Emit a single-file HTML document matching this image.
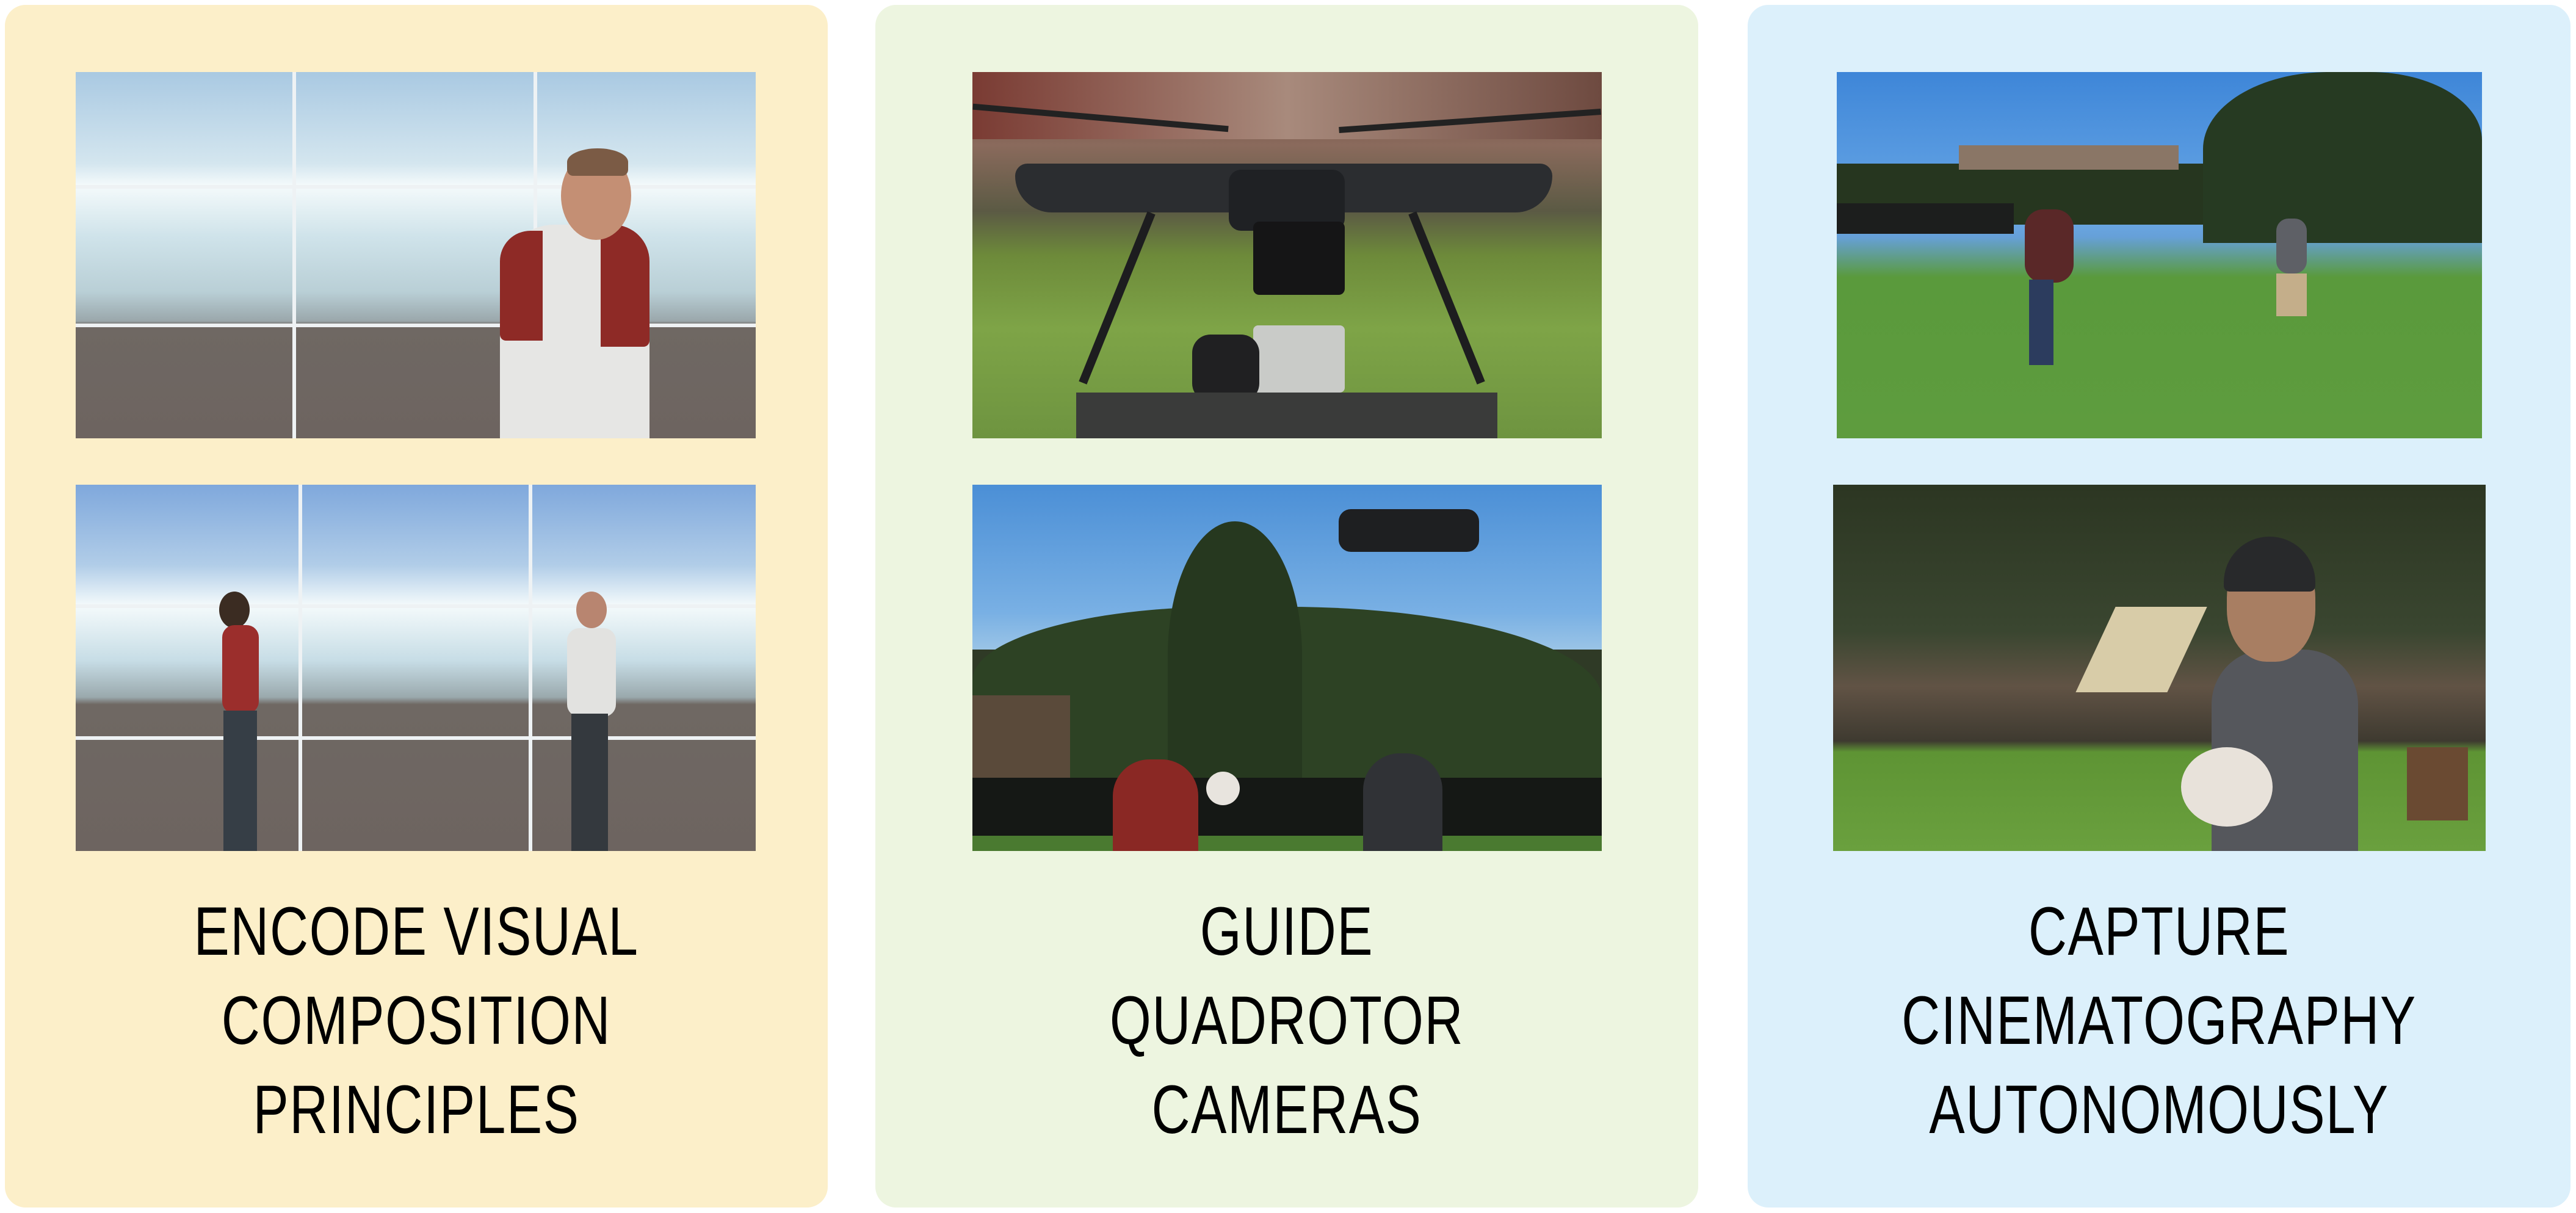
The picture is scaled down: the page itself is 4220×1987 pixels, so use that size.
<!DOCTYPE html>
<html><head><meta charset="utf-8"><style>
*{margin:0;padding:0;box-sizing:border-box}
body{width:4220px;height:1987px;background:#fff;position:relative;overflow:hidden;font-family:"Liberation Sans",sans-serif}
.p{position:absolute;top:8px;height:1970px;width:1348px;border-radius:34px}
.im{position:absolute;overflow:hidden}
.t{position:absolute;left:0;width:100%;text-align:center;font-size:112px;line-height:146px;color:#000;transform:scaleX(.78);top:1453px;letter-spacing:2px}
.a{position:absolute}
.vl{position:absolute;top:0;bottom:0;width:6px;background:#eef2f4}
.hl{position:absolute;left:0;right:0;height:6px;background:#eef2f4}
</style></head><body>
<div class="p" style="left:8px;background:#fcefc9"></div>
<div class="p" style="left:1434px;background:#edf5e0"></div>
<div class="p" style="left:2863px;background:#dcf0fb"></div>

<!-- panel 1 img 1 -->
<div class="im" style="left:124px;top:118px;width:1114px;height:600px;background:linear-gradient(#a9c9e2 0%,#d4e6ef 25%,#f4fafb 31%,#cfe3ea 45%,#b9cfd6 60%,#9aa7ab 68%,#6f6863 69%,#6d6460 100%)">
 <div class="vl" style="left:355px"></div><div class="vl" style="left:750px"></div>
 <div class="hl" style="top:185px"></div><div class="hl" style="top:412px"></div>
 <div class="a" style="left:695px;top:250px;width:245px;height:350px;background:#e6e6e4;border-radius:90px 90px 0 0"></div>
 <div class="a" style="left:695px;top:260px;width:70px;height:180px;background:#8e2a26;border-radius:50px 0 0 10px"></div>
 <div class="a" style="left:860px;top:250px;width:80px;height:200px;background:#8e2a26;border-radius:0 60px 10px 0"></div>
 <div class="a" style="left:795px;top:130px;width:115px;height:145px;background:#c48f74;border-radius:50%"></div>
 <div class="a" style="left:805px;top:125px;width:100px;height:45px;background:#7b5b45;border-radius:50% 50% 10px 10px"></div>
</div>
<!-- panel 1 img 2 -->
<div class="im" style="left:124px;top:794px;width:1114px;height:600px;background:linear-gradient(#7fa8dc 0%,#b1cde8 22%,#f4fafb 33%,#c7dde6 48%,#9aa9ad 58%,#6f6863 60%,#6d6460 100%)">
 <div class="vl" style="left:365px"></div><div class="vl" style="left:742px"></div>
 <div class="hl" style="top:196px"></div><div class="hl" style="top:412px"></div>
 <div class="a" style="left:235px;top:175px;width:50px;height:60px;background:#3b2c22;border-radius:50%"></div>
 <div class="a" style="left:240px;top:230px;width:60px;height:145px;background:#9b2e2c;border-radius:20px"></div>
 <div class="a" style="left:242px;top:370px;width:55px;height:230px;background:#363e46"></div>
 <div class="a" style="left:820px;top:175px;width:50px;height:60px;background:#b88570;border-radius:50%"></div>
 <div class="a" style="left:805px;top:235px;width:80px;height:145px;background:#e2e2e0;border-radius:20px"></div>
 <div class="a" style="left:812px;top:375px;width:60px;height:225px;background:#34393e"></div>
</div>
<div class="t" style="left:8px;width:1348px">ENCODE VISUAL<br>COMPOSITION<br>PRINCIPLES</div>

<!-- panel 2 img 1 -->
<div class="im" style="left:1593px;top:118px;width:1031px;height:600px;background:linear-gradient(#6a4a42 0%,#8a6a5c 20%,#5b5a44 38%,#6d8a3a 50%,#7ea447 70%,#6e9440 100%)">
 <div class="a" style="left:0;top:0;width:1031px;height:110px;background:linear-gradient(90deg,#7a3b33,#a88a7c 50%,#6e4a40)"></div>
 <div class="a" style="left:70px;top:150px;width:880px;height:80px;background:#2b2d30;border-radius:40px 40px 120px 120px"></div>
 <div class="a" style="left:420px;top:160px;width:190px;height:100px;background:#1f2124;border-radius:20px"></div>
 <div class="a" style="left:0;top:70px;width:420px;height:10px;background:#222;transform:rotate(5deg)"></div>
 <div class="a" style="left:600px;top:75px;width:430px;height:10px;background:#222;transform:rotate(-4deg)"></div>
 <div class="a" style="left:230px;top:220px;width:14px;height:300px;background:#1d1d1f;transform:rotate(22deg)"></div>
 <div class="a" style="left:770px;top:220px;width:14px;height:300px;background:#1d1d1f;transform:rotate(-22deg)"></div>
 <div class="a" style="left:460px;top:245px;width:150px;height:120px;background:#151516;border-radius:10px"></div>
 <div class="a" style="left:460px;top:415px;width:150px;height:110px;background:#c9cbc8;border-radius:8px"></div>
 <div class="a" style="left:360px;top:430px;width:110px;height:110px;background:#202022;border-radius:30px"></div>
 <div class="a" style="left:170px;top:525px;width:690px;height:80px;background:#3a3b3a"></div>
</div>
<!-- panel 2 img 2 -->
<div class="im" style="left:1593px;top:794px;width:1031px;height:600px;background:linear-gradient(#4b8fd6 0%,#79b0e4 35%,#9ac4e6 45%,#2f3a26 45%)">
 <div class="a" style="left:0;top:200px;width:1031px;height:300px;background:#2d4224;border-radius:40% 50% 0 0"></div>
 <div class="a" style="left:320px;top:60px;width:220px;height:440px;background:#26381f;border-radius:50% 50% 0 0"></div>
 <div class="a" style="left:0;top:345px;width:160px;height:160px;background:#5a4a3a"></div>
 <div class="a" style="left:0;top:480px;width:1031px;height:100px;background:#151815"></div>
 <div class="a" style="left:0;top:575px;width:1031px;height:25px;background:#4a7a30"></div>
 <div class="a" style="left:600px;top:40px;width:230px;height:70px;background:#1e1f21;border-radius:20px"></div>
 <div class="a" style="left:230px;top:450px;width:140px;height:150px;background:#8a2824;border-radius:60px 60px 0 0"></div>
 <div class="a" style="left:640px;top:440px;width:130px;height:160px;background:#303236;border-radius:60px 60px 0 0"></div>
 <div class="a" style="left:383px;top:470px;width:55px;height:55px;background:#e8e4de;border-radius:50%"></div>
</div>
<div class="t" style="left:1434px;width:1348px">GUIDE<br>QUADROTOR<br>CAMERAS</div>

<!-- panel 3 img 1 -->
<div class="im" style="left:3009px;top:118px;width:1057px;height:600px;background:linear-gradient(#3e86d8 0%,#6aa8e6 40%,#66a0d8 45%,#5a9a3c 56%,#5e9c3e 100%)">
 <div class="a" style="left:0;top:150px;width:1057px;height:100px;background:#26361f"></div>
 <div class="a" style="left:600px;top:0;width:457px;height:280px;background:#263a22;border-radius:45% 40% 0 0"></div>
 <div class="a" style="left:200px;top:120px;width:360px;height:40px;background:#8a7666"></div>
 <div class="a" style="left:0;top:215px;width:290px;height:50px;background:#1c1e1d"></div>
 <div class="a" style="left:308px;top:225px;width:80px;height:120px;background:#5a2828;border-radius:30px"></div>
 <div class="a" style="left:315px;top:340px;width:40px;height:140px;background:#2c3c5e"></div>
 <div class="a" style="left:720px;top:240px;width:50px;height:90px;background:#5e6066;border-radius:20px"></div>
 <div class="a" style="left:720px;top:330px;width:50px;height:70px;background:#c4ae8a"></div>
</div>
<!-- panel 3 img 2 -->
<div class="im" style="left:3003px;top:794px;width:1069px;height:600px;background:linear-gradient(#2c3622 0%,#3a4630 40%,#615345 55%,#3e3a30 70%,#5e9434 73%,#6aa03e 100%)">
 <div class="a" style="left:430px;top:200px;width:150px;height:140px;background:#d8cca8;transform:skewX(-25deg)"></div>
 <div class="a" style="left:620px;top:270px;width:240px;height:330px;background:#55575c;border-radius:90px 90px 0 0"></div>
 <div class="a" style="left:645px;top:100px;width:145px;height:190px;background:#a87e62;border-radius:45%"></div>
 <div class="a" style="left:640px;top:85px;width:150px;height:90px;background:#28292b;border-radius:80px 80px 10px 10px"></div>
 <div class="a" style="left:570px;top:430px;width:150px;height:130px;background:#e8e2da;border-radius:50%"></div>
 <div class="a" style="left:940px;top:430px;width:100px;height:120px;background:#6a4a32"></div>
</div>
<div class="t" style="left:2863px;width:1348px">CAPTURE<br>CINEMATOGRAPHY<br>AUTONOMOUSLY</div>
</body></html>
